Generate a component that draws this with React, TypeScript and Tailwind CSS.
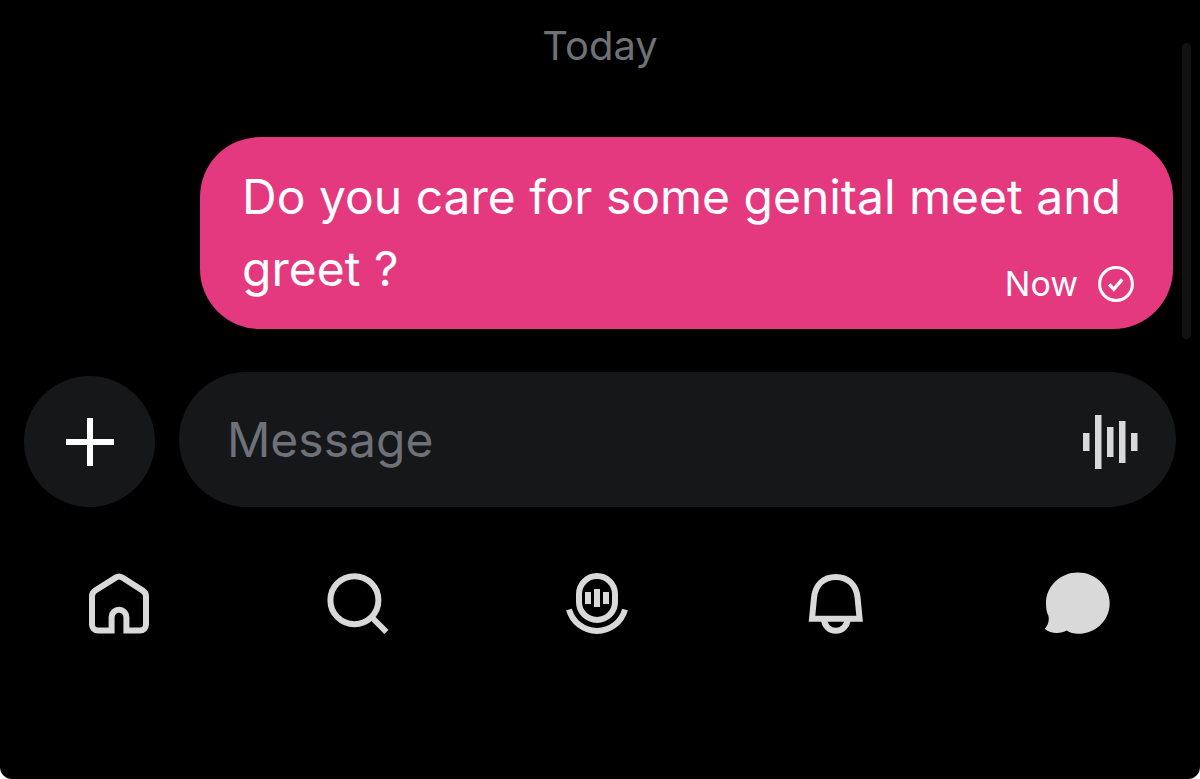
import type { ReactNode } from 'react';

const waveform = [
  { x: 0, height: 18 },
  { x: 12, height: 54 },
  { x: 24, height: 30 },
  { x: 36, height: 42 },
  { x: 48, height: 18 },
];

function NavIcon({ children }: { children: ReactNode }) {
  return (
    <svg viewBox="0 0 72 72" className="w-[72px] h-[72px]" fill="none" stroke="currentColor" strokeWidth="6" aria-hidden="true">
      {children}
    </svg>
  );
}

const navItems = [
  {
    label: 'Home',
    href: '#home',
    icon: (
      <path d="M28.6 63.6H15a6 6 0 0 1-6-6V29.5a7 7 0 0 1 3.2-5.9L32.7 10.6a6 6 0 0 1 6.6 0L59.8 23.6a7 7 0 0 1 3.2 5.9v28.1a6 6 0 0 1-6 6H43.4V50.2a7.4 7.4 0 0 0-14.8 0z" />
    ),
  },
  {
    label: 'Search',
    href: '#search',
    icon: (
      <>
        <circle cx="32.4" cy="33.2" r="24" />
        <path d="M48.5 49L64.4 65" />
      </>
    ),
  },
  {
    label: 'Voice',
    href: '#voice',
    icon: (
      <>
        <rect x="18" y="9" width="36" height="44" rx="18" />
        <path d="M8 42.5a29 29 0 0 0 56 0" />
        <path d="M27 25v12M36 22v18M45 25v12" />
      </>
    ),
  },
  {
    label: 'Notifications',
    href: '#notifications',
    icon: (
      <>
        <path d="M12 51.7L14 31C15.2 17.5 24 9.9 35.8 9.9S56.4 17.5 57.6 31l2 20.7z" />
        <path d="M24 52a11.8 11.8 0 0 0 23.6 0" />
      </>
    ),
  },
  {
    label: 'Messages',
    href: '#messages',
    icon: (
      <path
        d="M38.9 5.4c17.6 0 31.8 13.6 31.8 30.8s-14.2 30.6-31.8 30.6c-4 0-8-.8-11.2-3.2-5 2.8-15.5 4-22-1.8 3.2-3 5-8.4 3.6-13.2C7.6 45 7 41.2 7 36.2 7 19 21.3 5.4 38.9 5.4z"
        fill="currentColor"
        stroke="none"
      />
    ),
  },
];

export default function App() {
  return (
    <div className="bg-white">
      <div className="relative flex min-h-screen flex-col rounded-b-xl bg-black font-['Inter',sans-serif]">
        {/* Conversation */}
        <main>
          <p className="pt-5 text-center text-[40px] leading-[52px] text-[#6e7175]">Today</p>

          <div className="relative mt-[65px] ml-[200px] mr-[27px] rounded-[60px] bg-[#e5397f] py-6 pr-9 pl-[42px] text-white">
            <p className="text-[48px] leading-[72px]">Do you care for some genital meet and greet ?</p>
            <div className="absolute right-[39px] bottom-6 flex items-center gap-5">
              <span className="text-[34px] leading-[42px]">Now</span>
              <svg viewBox="0 0 36 36" className="h-9 w-9" fill="none" stroke="currentColor" role="img" aria-label="Sent">
                <circle cx="18" cy="18" r="16.4" strokeWidth="3" />
                <path d="M11.2 18.4l4.6 4.9 8.4-10" strokeWidth="3.4" />
              </svg>
            </div>
          </div>
        </main>

        {/* Scrollbar */}
        <div className="absolute top-[43px] right-[9px] h-[296px] w-[9px] rounded-full bg-[#121212]" />

        {/* Composer */}
        <form className="mt-[43px] flex items-end gap-6 px-6">
          <button
            type="button"
            aria-label="Add attachment"
            className="flex h-[131px] w-[131px] shrink-0 items-center justify-center rounded-full bg-[#161719] text-white"
          >
            <svg viewBox="0 0 48 48" className="h-12 w-12" stroke="currentColor" strokeWidth="6" aria-hidden="true">
              <path d="M24 0v48M0 24h48" />
            </svg>
          </button>
          <div className="flex h-[135px] min-w-0 flex-1 items-center rounded-full bg-[#161719] pr-[37px] pl-12">
            <input
              type="text"
              aria-label="Message"
              placeholder="Message"
              className="min-w-0 flex-1 bg-transparent text-[48px] leading-[72px] text-white outline-none placeholder:text-[#6e7177]"
            />
            <button type="button" aria-label="Record voice message" className="text-[#d9d9d9]">
              <svg viewBox="0 0 56 60" className="h-[60px] w-14" fill="currentColor" aria-hidden="true">
                {waveform.map((bar) => (
                  <rect key={bar.x} x={bar.x} y={32 - bar.height / 2} width="6.5" height={bar.height} />
                ))}
              </svg>
            </button>
          </div>
        </form>

        {/* Bottom navigation */}
        <nav className="mt-[60px] grid grid-cols-5 pr-[6px] text-[#d9d9d9]">
          {navItems.map((item) => (
            <a key={item.label} href={item.href} aria-label={item.label} className="flex justify-center">
              <NavIcon>{item.icon}</NavIcon>
            </a>
          ))}
        </nav>
      </div>
    </div>
  );
}
